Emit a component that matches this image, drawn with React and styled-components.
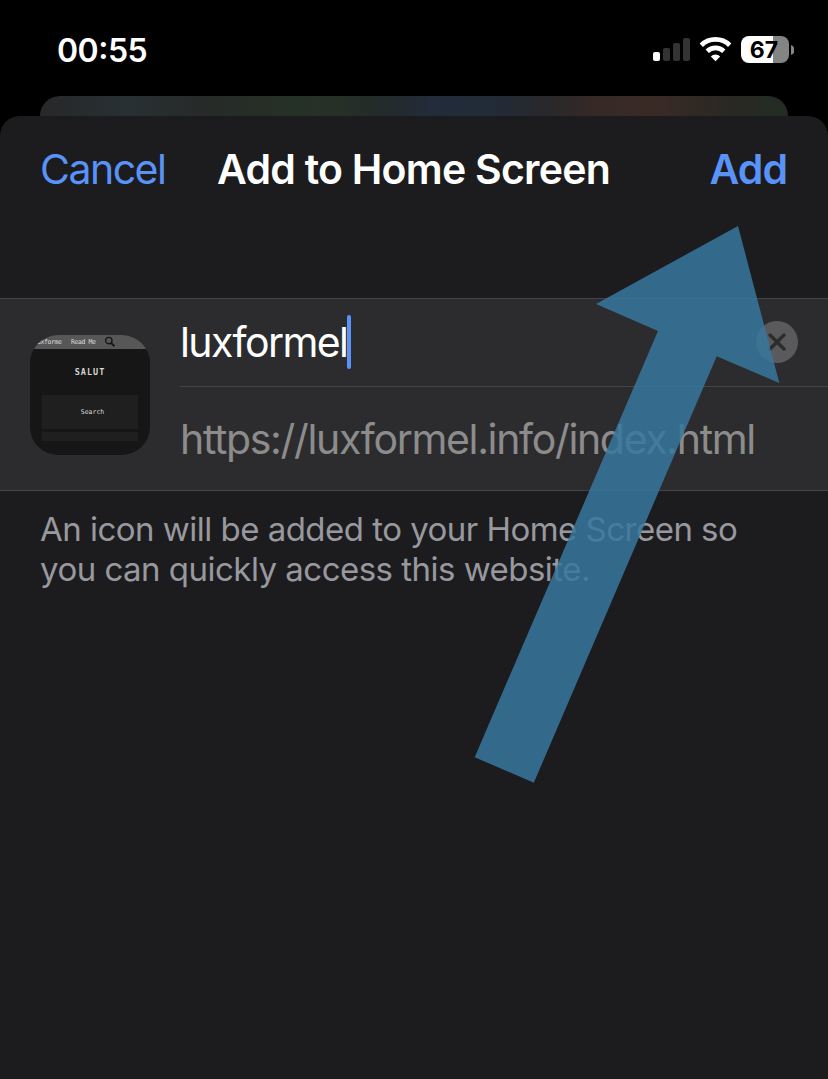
import React from "react";
import styled, { createGlobalStyle } from "styled-components";

const GlobalStyle = createGlobalStyle`
  * { box-sizing: border-box; }
  body { margin: 0; background: #000; }
`;

const Screen = styled.main`
  position: relative;
  display: flex;
  flex-direction: column;
  width: 828px;
  height: 1079px;
  overflow: hidden;
  background: #000;
  color: #fff;
  font-family: Inter, "Liberation Sans", sans-serif;
`;

const StatusBar = styled.header`
  display: flex;
  flex: none;
  justify-content: space-between;
  align-items: center;
  height: 96px;
  padding: 3px 34px 0 57px;
`;

const Clock = styled.time`
  display: flex;
  padding-top: 2px;
  font-size: 32px;
  line-height: 40px;
  font-weight: 600;
  letter-spacing: -0.5px;
`;

const ClockColon = styled.span`
  margin-top: -3px;
`;

const StatusIcons = styled.div`
  display: flex;
  align-items: center;
`;

const Signal = styled.svg`
  display: block;
  width: 37px;
  height: 23px;
  margin-right: 9px;
`;

const Wifi = styled.svg`
  display: block;
  width: 33px;
  height: 25px;
  margin-right: 9px;
`;

const Battery = styled.div`
  width: 48px;
  height: 27px;
  padding-right: 2px;
  border-radius: 8px;
  background: linear-gradient(90deg, #fff 32px, #848484 32px);
  color: #000;
  font-size: 23px;
  line-height: 29px;
  font-weight: 700;
  letter-spacing: 0;
  text-align: center;
`;

const BatteryCap = styled.svg`
  display: block;
  width: 3px;
  height: 10px;
  margin-left: 2px;
`;

const CardBehind = styled.div`
  flex: none;
  height: 20px;
  margin: 0 40px;
  border-radius: 20px 20px 0 0;
  background: linear-gradient(90deg, #272829 0, #283033 90px, #272a29 160px, #263126 250px, #263027 300px, #232a2b 345px, #222c3a 390px, #222b38 450px, #29282c 505px, #372925 560px, #392a26 620px, #292822 690px, #222d22 748px);
`;

const Sheet = styled.section`
  flex: 1;
  border-radius: 20px 20px 0 0;
  background: #1c1c1e;
`;

const NavBar = styled.div`
  display: grid;
  grid-template-columns: 1fr auto 1fr;
  align-items: center;
  height: 182px;
  padding: 0 41px 76px 40px;
`;

const NavButton = styled.button`
  justify-self: ${(p) => (p.$primary ? "end" : "start")};
  padding: 0;
  border: 0;
  background: none;
  color: #5a93f8;
  font: inherit;
  font-size: 41px;
  line-height: 50px;
  font-weight: ${(p) => (p.$primary ? 600 : 400)};
  letter-spacing: ${(p) => (p.$primary ? "-1px" : "-1.5px")};
`;

const Title = styled.h1`
  margin: 0;
  font-size: 41px;
  line-height: 50px;
  font-weight: 600;
  letter-spacing: -0.75px;
  white-space: nowrap;
`;

const Group = styled.div`
  display: flex;
  height: 193px;
  padding-left: 30px;
  border: solid #444446;
  border-width: 1px 0;
  background: #2c2c2e;
`;

const AppIcon = styled.div`
  flex: none;
  width: 120px;
  height: 120px;
  margin: 36px 30px 0 0;
  overflow: hidden;
  border-radius: 28px;
  background: #161616;
  color: #ddd;
  font-family: "DejaVu Sans Mono", monospace;
`;

const IconBar = styled.div`
  display: flex;
  align-items: center;
  height: 14px;
  padding-left: 7px;
  background: #575757;
  font-size: 6.5px;
  line-height: 14px;
  letter-spacing: -0.4px;
  white-space: pre;
`;

const IconBarItem = styled.span`
  flex: none;
  width: ${(p) => p.$width}px;
`;

const IconTitle = styled.div`
  padding-top: 17px;
  color: #d5d5d5;
  font-size: 8.5px;
  line-height: 12px;
  font-weight: 700;
  letter-spacing: 1px;
  text-align: center;
`;

const IconPanel = styled.div`
  height: ${(p) => p.$height}px;
  margin: ${(p) => p.$top}px 12px 0;
  padding-left: 5px;
  background: #1f1f1f;
  font-size: 6.5px;
  line-height: 35px;
  text-align: center;
`;

const Fields = styled.div`
  flex: 1;
  font-size: 41px;
  line-height: 50px;
`;

const NameRow = styled.div`
  display: flex;
  align-items: center;
  height: 88px;
  padding: 0 30px 1px 0;
  border-bottom: 1px solid #444446;
  letter-spacing: -1.6px;
`;

const Caret = styled.span`
  width: 4px;
  height: 54px;
  border-radius: 2px;
  background: #5a93f8;
`;

const ClearButton = styled.button`
  width: 42px;
  height: 42px;
  margin-left: auto;
  padding: 0;
  border: 0;
  border-radius: 50%;
  background: #5a5a5d;

  svg { display: block; }
`;

const UrlRow = styled.div`
  display: flex;
  align-items: center;
  height: 103px;
  padding-top: 1px;
  color: #8c8c8c;
  letter-spacing: -1.34px;
  white-space: nowrap;
`;

const Note = styled.p`
  margin: 18px 0 0 40px;
  color: #98989f;
  font-size: 33px;
  line-height: 40px;
  letter-spacing: -0.52px;
  white-space: nowrap;
`;

const PointerArrow = styled.svg`
  position: absolute;
  top: 226px;
  left: 474px;
  width: 306px;
  height: 558px;
  pointer-events: none;
`;

export default function App() {
  return (
    <Screen>
      <GlobalStyle />
      <StatusBar>
        <Clock>
          00<ClockColon>:</ClockColon>55
        </Clock>
        <StatusIcons>
          <Signal viewBox="0 0 37 23">
            <rect x="0" y="14" width="7" height="9" rx="2" fill="#fff" />
            <rect x="10" y="10" width="7" height="13" rx="2" fill="#333" />
            <rect x="20" y="5" width="7" height="18" rx="2" fill="#333" />
            <rect x="30" y="0" width="7" height="23" rx="2" fill="#333" />
          </Signal>
          <Wifi viewBox="0 0 33 25">
            <path d="M2.3 8.2a20.4 20.4 0 0 1 28.4 0M8.2 14.2a12 12 0 0 1 16.6 0" fill="none" stroke="#fff" strokeWidth="4.8" />
            <path d="M16.5 24.2 11.8 19.4a6.8 6.8 0 0 1 9.4 0z" fill="#fff" />
          </Wifi>
          <Battery>67</Battery>
          <BatteryCap viewBox="0 0 3 10">
            <path d="M0 0a5.3 5.3 0 0 1 0 10z" fill="#848484" />
          </BatteryCap>
        </StatusIcons>
      </StatusBar>
      <CardBehind />
      <Sheet>
        <NavBar>
          <NavButton>Cancel</NavButton>
          <Title>Add to Home Screen</Title>
          <NavButton $primary>Add</NavButton>
        </NavBar>
        <Group>
          <AppIcon>
            <IconBar>
              <IconBarItem $width={34}>uxforme</IconBarItem>
              <IconBarItem $width={33}>Read Me</IconBarItem>
              <svg width="12" height="12" viewBox="0 0 12 12" fill="none" stroke="#151515">
                <circle cx="4.8" cy="4.6" r="3.2" strokeWidth="1.4" />
                <path d="m7.2 7 3.3 3.3" strokeWidth="1.8" />
              </svg>
            </IconBar>
            <IconTitle>SALUT</IconTitle>
            <IconPanel $top={17} $height={34}>Search</IconPanel>
            <IconPanel $top={3} $height={9} />
          </AppIcon>
          <Fields>
            <NameRow>
              <span>luxformel</span>
              <Caret />
              <ClearButton aria-label="Clear text">
                <svg width="42" height="42" viewBox="0 0 42 42">
                  <path d="m14 14 14 14m0-14L14 28" stroke="#2c2c2e" strokeWidth="3.4" strokeLinecap="round" />
                </svg>
              </ClearButton>
            </NameRow>
            <UrlRow>https://luxformel.info/index.html</UrlRow>
          </Fields>
        </Group>
        <Note>
          An icon will be added to your Home Screen so
          <br />
          you can quickly access this website.
        </Note>
      </Sheet>
      <PointerArrow viewBox="474 226 306 558">
        <path d="M738 226 596 304l62 27L474.7 757.2l59.1 25.6L716.7 356.3l62.6 26.7z" fill="#37789f" fillOpacity="0.85" />
      </PointerArrow>
    </Screen>
  );
}
